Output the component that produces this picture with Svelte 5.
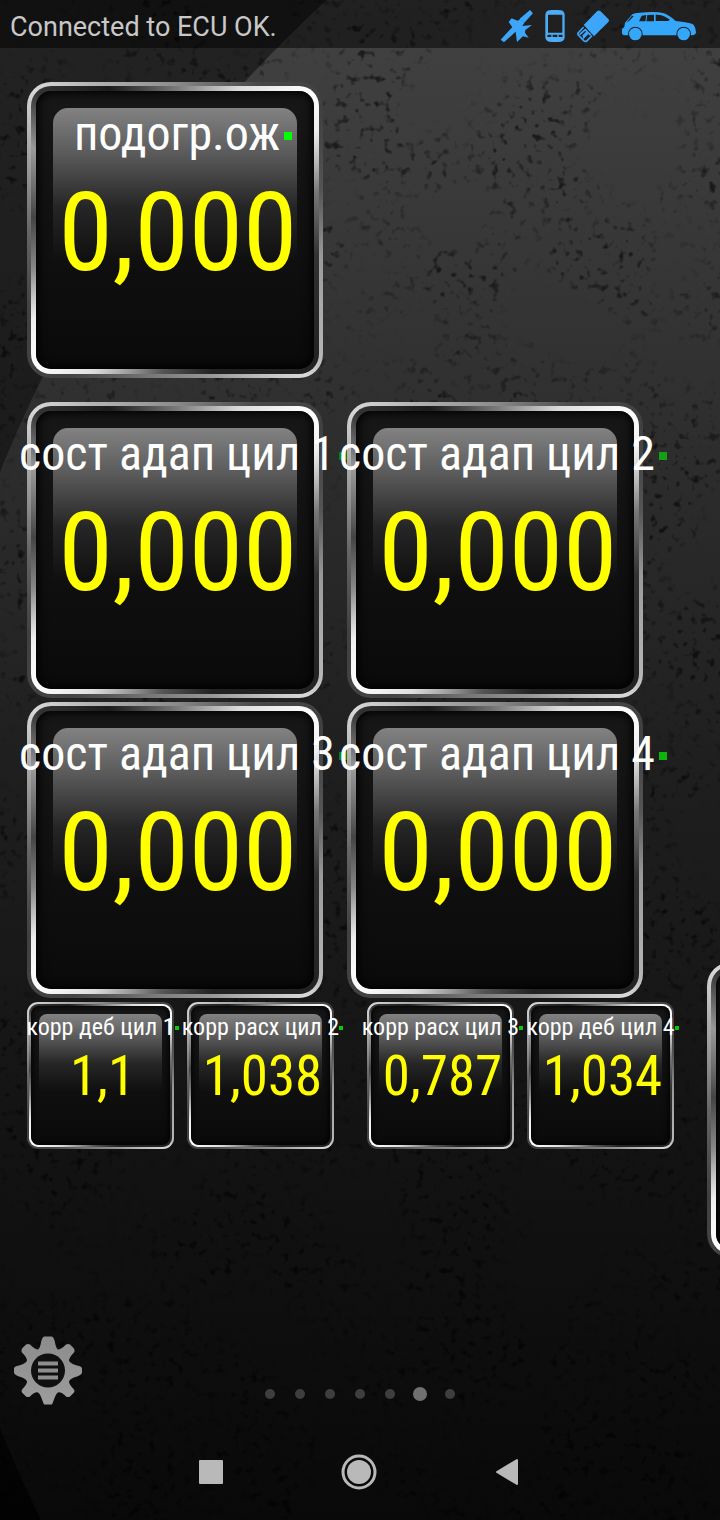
<script lang="ts">
  const heater = { label: 'подогр.ож', value: '0,000', led: '#00ff00' }

  const adaptation = [
    { label: 'сост адап цил 1', value: '0,000', led: '#0c800c' },
    { label: 'сост адап цил 2', value: '0,000', led: '#14a014' },
    { label: 'сост адап цил 3', value: '0,000', led: '#0c800c' },
    { label: 'сост адап цил 4', value: '0,000', led: '#0cb40c' },
  ]

  const corrections = [
    [
      { label: 'корр деб цил 1', value: '1,1', led: '#0cc80c' },
      { label: 'корр расх цил 2', value: '1,038', led: '#0cc80c' },
    ],
    [
      { label: 'корр расх цил 3', value: '0,787', led: '#0cc80c' },
      { label: 'корр деб цил 4', value: '1,034', led: '#0cc80c' },
    ],
  ]

  const pages = [1, 2, 3, 4, 5, 6, 7]
  let current = 6

  const goTo = (page) => () => {
    current = page
  }
</script>

{#snippet gauge(item, small)}
  <article class="gauge" class:small>
    <div class="rim">
      <div class="face">
        <h2 class="label">{item.label}<i class="led" style="background: {item.led}"></i></h2>
        <p class="value">{item.value}</p>
      </div>
    </div>
  </article>
{/snippet}

<div class="screen">
  <svg class="wall" viewBox="0 0 720 1520" preserveAspectRatio="xMidYMid slice" aria-hidden="true">
    <defs>
      <linearGradient id="shade" x1="0" y1="0" x2="0" y2="1">
        <stop offset="0" stop-color="#424242" />
        <stop offset="0.15" stop-color="#383838" />
        <stop offset="0.3" stop-color="#2d2d2d" />
        <stop offset="0.5" stop-color="#1f1f1f" />
        <stop offset="0.75" stop-color="#131313" />
        <stop offset="1" stop-color="#090909" />
      </linearGradient>
      <linearGradient id="outer" x1="0" y1="0" x2="0" y2="1">
        <stop offset="0" stop-color="#232323" />
        <stop offset="0.3" stop-color="#1b1b1b" />
        <stop offset="1" stop-color="#020202" />
      </linearGradient>
      <clipPath id="round"><circle cx="1195" cy="950" r="1287" /></clipPath>
      <filter id="specks" x="0" y="0" width="100%" height="100%">
        <feTurbulence type="fractalNoise" baseFrequency="0.12" numOctaves="2" seed="8" result="fine" />
        <feColorMatrix in="fine" type="matrix" values="0 0 0 0 0  0 0 0 0 0  0 0 0 0 0  5 0 0 0 -2.9" result="dots" />
        <feTurbulence type="fractalNoise" baseFrequency="0.01" numOctaves="3" seed="5" />
        <feColorMatrix type="matrix" values="0 0 0 0 0  0 0 0 0 0  0 0 0 0 0  0 4 0 0 -1.5" result="patches" />
        <feComposite in="dots" in2="patches" operator="in" />
      </filter>
    </defs>
    <rect width="720" height="1520" fill="url(#outer)" />
    <rect width="720" height="1520" fill="url(#shade)" clip-path="url(#round)" />
    <rect width="720" height="1520" filter="url(#specks)" opacity="0.55" />
  </svg>

  <header class="status">
    <span class="message">Connected to ECU OK.</span>
    <div class="links">
      <svg width="33" height="33" viewBox="58 30 99 99" role="img" aria-label="GPS">
        <g fill="#3da6fa">
          <path d="M60 119 L96 80 L108 92 L70 127 Z" />
          <path d="M117 56 L148 30 L157 40 L131 68 Z" />
          <path d="M84 66 L93 55 Q104 60 112 62 L119 56 L131 68 L125 78 L154 75 L134 90 L133 98 L144 113 L127 109 L109 126 L105 96 Z" />
        </g>
      </svg>
      <svg width="20" height="32" viewBox="198 30 60 96" role="img" aria-label="Phone">
        <path
          fill="#4cacf5"
          fill-rule="evenodd"
          d="M210 31 Q228 28 246 31 Q256 33 257 44 V112 Q256 123 246 125 Q228 127 210 125 Q200 123 199 112 V44 Q200 33 210 31 Z M207 44 V98 H250 V44 Z M206 104 L205 111 H217 V104 Z M221 104 V111 H235 V104 Z M239 104 V111 H251 L250 104 Z"
        />
      </svg>
      <svg width="32" height="33" viewBox="300 29 96 99" role="img" aria-label="Adapter">
        <path fill="#3da6fa" d="M320 74 L361 32 Q365 29 370 32 L394 56 Q398 61 394 65 L351 108 Z" />
        <path fill="none" stroke="#3da6fa" stroke-width="5" d="M320 80 L304 97 Q301 101 304 104 L320 121 Q325 125 329 122 L345 106" />
        <path fill="none" stroke="#3da6fa" stroke-width="5" d="M308 103 L325 88 L331 94 L317 108 M318 114 L334 98 L341 104" />
      </svg>
      <svg width="76" height="30" viewBox="424 40 228 90" role="img" aria-label="Vehicle">
        <path
          fill="#35a7fb"
          d="M427 94 L434 88 L436 75 L458 50 Q464 46 480 45 Q530 41 550 46 Q566 50 588 70 Q626 74 640 80 Q648 88 649 106 Q646 113 637 113 H438 Q427 113 427 106 Z"
        />
        <g fill="#1d1e1e">
          <path d="M440 75 L457 54 L462 56 L449 69 Z" />
          <path d="M478 71 L486 54 L500 52 L497 71 Z" />
          <path d="M500 71 L503 52 L523 51 V71 Z" />
          <path d="M528 70 V51 Q545 50 556 57 L571 66 L565 70 Z" />
          <circle cx="467" cy="109" r="22" />
          <circle cx="612" cy="109" r="22" />
        </g>
        <circle cx="467" cy="109" r="19" fill="#35a7fb" />
        <circle cx="612" cy="109" r="19" fill="#35a7fb" />
      </svg>
    </div>
  </header>

  <main>
    <section class="row first">
      {@render gauge(heater, false)}
    </section>

    <section class="row">
      {#each adaptation as item}
        {@render gauge(item, false)}
      {/each}
    </section>

    <section class="row minor">
      {#each corrections as pair}
        <div class="pair">
          {#each pair as item}
            {@render gauge(item, true)}
          {/each}
        </div>
      {/each}
    </section>

    <!-- edge of the gauge that lives on the next page -->
    <div class="peek" aria-hidden="true">
      <div class="gauge"><div class="rim"><div class="face"></div></div></div>
    </div>
  </main>

  <footer class="tools">
    <button class="menu" aria-label="Menu">
      <svg width="68" height="69" viewBox="-34 -34 68 68">
        <defs>
          <linearGradient id="metal" x1="0" y1="0" x2="0" y2="1">
            <stop offset="0" stop-color="#8c8c8c" />
            <stop offset="1" stop-color="#9c9c9c" />
          </linearGradient>
        </defs>
        <path
          fill="url(#metal)"
          d="M-4 -34 H4 Q6 -33 7 -28 Q8 -22 10 -21 Q13 -21 18 -26 Q20 -27 22 -26 L26 -22 Q27 -20 26 -18 Q21 -13 21 -10 Q22 -7 29 -5 Q34 -4 34 -2 V2 Q34 4 29 6 Q22 8 21 11 Q21 14 26 19 Q27 21 26 22 L22 26 Q20 27 18 26 Q13 21 10 22 Q8 23 6 29 L4 34 H-4 L-6 29 Q-8 23 -10 22 Q-13 21 -18 26 Q-20 27 -22 26 L-26 22 Q-27 21 -26 19 Q-21 14 -21 11 Q-22 8 -29 6 Q-34 4 -34 2 V-2 Q-34 -4 -29 -5 Q-22 -7 -21 -10 Q-21 -13 -26 -18 Q-27 -20 -26 -22 L-22 -26 Q-20 -27 -18 -26 Q-13 -21 -10 -21 Q-8 -22 -7 -28 Q-6 -33 -4 -34 Z"
        />
        <circle r="17" fill="#101010" />
        <path stroke="#8e8e8e" stroke-width="4" d="M-10 -7 H10 M-10 0 H10 M-10 7 H10" />
      </svg>
    </button>
    <div class="pager">
      {#each pages as page}
        <button class="page" class:active={page === current} aria-label={`Page ${page}`} on:click={goTo(page)}></button>
      {/each}
    </div>
  </footer>

  <nav class="system">
    <button aria-label="Recent apps">
      <svg width="24" height="24" viewBox="0 0 24 24"><rect x="0" y="0" width="24" height="24" rx="1" fill="#b9b9b9" /></svg>
    </button>
    <button aria-label="Home">
      <svg width="36" height="36" viewBox="0 0 36 36">
        <circle cx="18" cy="18" r="16" fill="none" stroke="#b9b9b9" stroke-width="3" />
        <circle cx="18" cy="18" r="12" fill="#b9b9b9" />
      </svg>
    </button>
    <button aria-label="Back">
      <svg width="24" height="28" viewBox="0 0 24 28">
        <path d="M2 14 L22 2 V26 Z" fill="#b9b9b9" stroke="#b9b9b9" stroke-width="2" stroke-linejoin="round" />
      </svg>
    </button>
  </nav>
</div>

<style>
  :global(body) {
    background: #090909;
  }

  .screen {
    position: relative;
    display: flex;
    flex-direction: column;
    min-height: 100vh;
    overflow: hidden;
    color: #fff;
    font-family: 'Roboto Condensed', Roboto, sans-serif;
  }

  .wall {
    position: absolute;
    inset: 0;
    width: 100%;
    height: 100%;
    z-index: -1;
  }

  .status {
    display: flex;
    align-items: center;
    justify-content: space-between;
    height: 48px;
    padding: 0 23px 0 10px;
    background: rgba(0, 0, 0, 0.5);
  }

  .message {
    color: #c8c8c8;
    font-family: Roboto, sans-serif;
    font-size: 27px;
    line-height: 44px;
    padding-top: 6px;
  }

  .links {
    display: flex;
    align-items: center;
    gap: 12px;
    padding-top: 4px;
  }

  main {
    position: relative;
    flex: 1;
    padding-top: 34px;
  }

  .row {
    display: grid;
    grid-template-columns: 1fr 1fr;
    gap: 4px 24px;
    padding: 0 77px 0 27px;
    margin-bottom: 4px;
  }

  .first {
    margin-bottom: 24px;
  }

  .minor {
    gap: 33px;
    padding-right: 46px;
  }

  .pair {
    display: grid;
    grid-template-columns: 1fr 1fr;
    gap: 13px;
  }

  .gauge {
    box-sizing: border-box;
    min-width: 0;
    aspect-ratio: 1;
    padding: 4px;
    border-radius: 24px;
    background: conic-gradient(#8c8c8c, #484848 30deg, #404040 50deg, #555 75deg, #999 100deg, #b4b4b4 130deg, #d8d8d8 138deg, #999 165deg, #777 190deg, #444 215deg, #404040 240deg, #666 270deg, #aaa 300deg, #d8d8d8 315deg, #b4b4b4 330deg, #8c8c8c);
  }

  .rim {
    box-sizing: border-box;
    height: 100%;
    padding: 5px;
    border-radius: 20px;
    background: conic-gradient(#777, #ddd 25deg, #fff 45deg, #eee 55deg, #777 75deg, #333 100deg, #222 135deg, #222 165deg, #555 185deg, #ddd 210deg, #fff 225deg, #eee 238deg, #888 255deg, #444 275deg, #999 300deg, #333 315deg, #1c1c1c 335deg, #777);
  }

  .face {
    position: relative;
    box-sizing: border-box;
    display: flex;
    flex-direction: column;
    align-items: center;
    height: 100%;
    padding-top: 15px;
    border-radius: 15px;
    background: linear-gradient(#171717, #0a0a0a);
    box-shadow: inset 0 0 10px 2px #000;
  }

  .face::before {
    content: '';
    position: absolute;
    left: 6%;
    right: 6%;
    top: 6%;
    height: 55%;
    border-radius: 15px 15px 0 0;
    background: linear-gradient(#828282, #5a5a5a 30%, rgba(42, 42, 42, 0.8) 65%, rgba(12, 12, 12, 0));
  }

  .label {
    position: relative;
    margin: 0;
    padding-left: 4px;
    font-size: 48px;
    font-weight: 400;
    line-height: 56px;
    white-space: nowrap;
  }

  .led {
    position: absolute;
    left: 100%;
    top: 26px;
    width: 8px;
    height: 8px;
    margin-left: 4px;
  }

  .value {
    position: relative;
    margin: 0;
    padding-left: 6px;
    color: #ff0;
    font-size: 110px;
    font-weight: 400;
    line-height: 142px;
    white-space: nowrap;
  }

  .small {
    padding: 2px;
    border-radius: 11px;
  }

  .small .rim {
    padding: 2px;
    border-radius: 9px;
  }

  .small .face {
    padding-top: 7px;
    border-radius: 8px;
    box-shadow: inset 0 0 6px 1px #000;
  }

  .small .face::before {
    border-radius: 8px 8px 0 0;
  }

  .small .label {
    padding: 0;
    font-size: 24px;
    line-height: 28px;
  }

  .small .led {
    top: 13px;
    width: 4px;
    height: 4px;
    margin-left: 0;
  }

  .small .value {
    padding-left: 4px;
    font-size: 55px;
    line-height: 70px;
  }

  .peek {
    position: absolute;
    left: calc(100% - 13px);
    top: 914px;
    width: 296px;
  }

  button {
    display: flex;
    align-items: center;
    justify-content: center;
    padding: 0;
    border: 0;
    background: none;
    cursor: pointer;
  }

  .tools {
    display: grid;
    grid-template-columns: 1fr auto 1fr;
    align-items: end;
    padding: 0 14px;
  }

  .menu {
    justify-self: start;
  }

  .pager {
    display: flex;
    height: 22px;
  }

  .page {
    width: 30px;
    height: 22px;
  }

  .page::before {
    content: '';
    width: 10px;
    height: 10px;
    border-radius: 50%;
    background: #3e3e3e;
  }

  .page.active::before {
    width: 14px;
    height: 14px;
    background: #707070;
  }

  .system {
    display: flex;
    align-items: center;
    justify-content: center;
    gap: 100px;
    height: 96px;
    margin-top: 19px;
    padding-right: 2px;
  }

  .system button {
    width: 48px;
    height: 48px;
  }
</style>
